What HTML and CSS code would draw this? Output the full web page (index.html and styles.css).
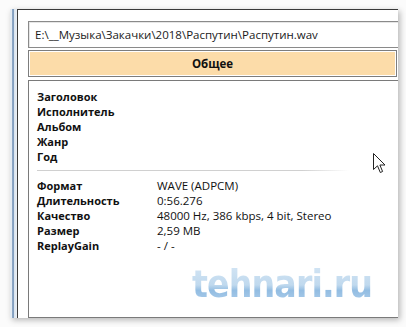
FILE: index.html
```html
<!DOCTYPE html>
<html>
<head>
<meta charset="utf-8">
<link rel="stylesheet" href="styles.css">
</head>
<body>
<div class="screen">
  <div class="window">
    <div class="strip"></div>
    <div class="pane">
      <div class="path">E:\__Музыка\Закачки\2018\Распутин\Распутин.wav</div>
      <div class="header"><span>Общее</span></div>
      <div class="info">
        <div class="group">
          <div class="row"><span class="label">Заголовок</span><span class="value"></span></div>
          <div class="row"><span class="label">Исполнитель</span><span class="value"></span></div>
          <div class="row"><span class="label">Альбом</span><span class="value"></span></div>
          <div class="row"><span class="label">Жанр</span><span class="value"></span></div>
          <div class="row"><span class="label">Год</span><span class="value"></span></div>
        </div>
        <div class="sep"></div>
        <div class="group">
          <div class="row"><span class="label">Формат</span><span class="value">WAVE (ADPCM)</span></div>
          <div class="row"><span class="label">Длительность</span><span class="value">0:56.276</span></div>
          <div class="row"><span class="label">Качество</span><span class="value">48000 Hz, 386 kbps, 4 bit, Stereo</span></div>
          <div class="row"><span class="label">Размер</span><span class="value">2,59 MB</span></div>
          <div class="row"><span class="label">ReplayGain</span><span class="value">- / -</span></div>
        </div>
      </div>
    </div>
  </div>
  <svg class="cursor" width="14" height="22" viewBox="0 0 14 22">
    <path d="M0.5 0.5 L0.5 16.5 L4.5 12.8 L7.3 19.5 L9.6 18.5 L6.9 12 L12 12 Z" fill="#fff" stroke="#222" stroke-width="1" stroke-linejoin="round"/>
  </svg>
  <div class="watermark">tehnari.ru</div>
</div>
</body>
</html>
```
FILE: styles.css
```css
html, body {
  margin: 0;
  padding: 0;
  background: #fff;
}
.screen {
  position: relative;
  width: 406px;
  height: 327px;
  overflow: hidden;
  background: #fbfbfb;
  font-family: "Open Sans", "Noto Sans", sans-serif;
  font-size: 11.5px;
  color: #111;
}
.window {
  display: flex;
  margin: 9px 0 0 10px;
  width: 388px;
  height: 309px;
  box-shadow: 2px 2px 6px rgba(0,0,0,0.28);
  background: #fff;
}
.strip {
  width: 7px;
  flex: none;
  background: linear-gradient(to right, #e4ebf2 0, #e4ebf2 2px, #8fa9c6 2px, #7e9cbf 4px, #dbe5ef 4px, #e9eff5 7px);
}
.pane {
  flex: 1;
  border-left: 1px solid #3a3a3a;
  border-top: 1px solid #3a3a3a;
  padding: 11px 0 0 10px;
  display: flex;
  flex-direction: column;
  overflow: hidden;
  min-width: 0;
}
.path {
  height: 25px;
  border: 1px solid #8a8a8a;
  border-right: none;
  box-shadow: inset 1px 1px 0 #e6e6e6;
  padding-left: 6px;
  line-height: 25px;
  font-size: 11.5px;
  white-space: nowrap;
  color: #1a1a1a;
}
.header {
  margin-top: 2px;
  margin-right: 1px;
  height: 25px;
  border: 1px solid #7d7d7d;
  box-shadow: inset 0 0 0 1px #fff;
  background: #fcdca9;
  display: flex;
  align-items: center;
  justify-content: center;
  font-weight: 700;
  font-size: 11.5px;
}
.info {
  margin-top: 3px;
  flex: 1;
  border: 1px solid #7a7a7a;
  border-right: none;
  padding: 8px 0 0 8px;
}
.row {
  display: flex;
  height: 15px;
  line-height: 15px;
  white-space: nowrap;
}
.label {
  width: 120px;
  flex: none;
  font-weight: 700;
  font-size: 11px;
}
.sep {
  margin: 6px 0 7px 0;
  width: 312px;
  height: 1px;
  background: linear-gradient(to right, #d0d0d0 0, #d0d0d0 85%, rgba(208,208,208,0) 100%);
}
.cursor {
  position: absolute;
  left: 373px;
  top: 153px;
}
.watermark {
  position: absolute;
  left: 192px;
  top: 262px;
  font-family: "DejaVu Sans", sans-serif;
  font-weight: 700;
  font-size: 37px;
  letter-spacing: -1px;
  line-height: 46px;
  transform-origin: left top;
  transform: scaleX(0.9);
  background: linear-gradient(to bottom, #d6e7f5 0%, #c0d9ee 50%, #93bde2 62%, #a9cbea 85%, #c6def2 100%);
  -webkit-background-clip: text;
  background-clip: text;
  color: transparent;
}
```
